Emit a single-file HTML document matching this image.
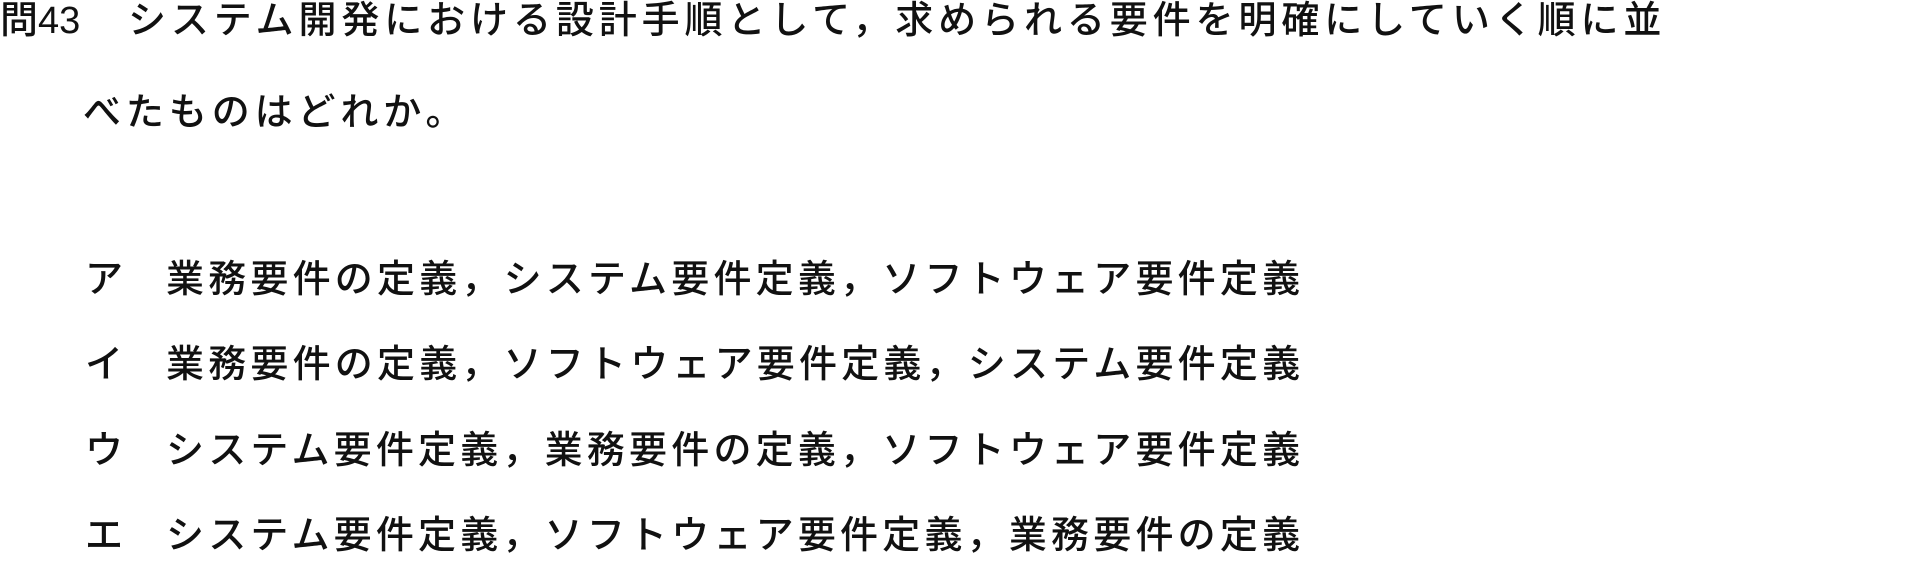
<!DOCTYPE html>
<html><head><meta charset="utf-8"><style>
body{margin:0;width:1910px;height:567px;background:#fff;position:relative;overflow:hidden;font-family:"Liberation Sans","Noto Sans CJK JP",sans-serif;color:#111;}
.l{position:absolute;font-size:38px;line-height:40px;height:40px;white-space:nowrap;font-weight:500;}
.t{letter-spacing:4.9px}
.o{letter-spacing:4.2px}
</style></head><body>
<div class="l" style="left:0;top:1px;">問43</div>
<div class="l t" style="left:128px;top:1px;">システム開発における設計手順として，求められる要件を明確にしていく順に並</div>
<div class="l t" style="left:83px;top:93px;">べたものはどれか。</div>
<div class="l" style="left:85px;top:260px;">ア</div>
<div class="l o" style="left:166px;top:260px;">業務要件の定義，システム要件定義，ソフトウェア要件定義</div>
<div class="l" style="left:85px;top:345px;">イ</div>
<div class="l o" style="left:166px;top:345px;">業務要件の定義，ソフトウェア要件定義，システム要件定義</div>
<div class="l" style="left:85px;top:431px;">ウ</div>
<div class="l o" style="left:166px;top:431px;">システム要件定義，業務要件の定義，ソフトウェア要件定義</div>
<div class="l" style="left:85px;top:516px;">エ</div>
<div class="l o" style="left:166px;top:516px;">システム要件定義，ソフトウェア要件定義，業務要件の定義</div>
</body></html>
